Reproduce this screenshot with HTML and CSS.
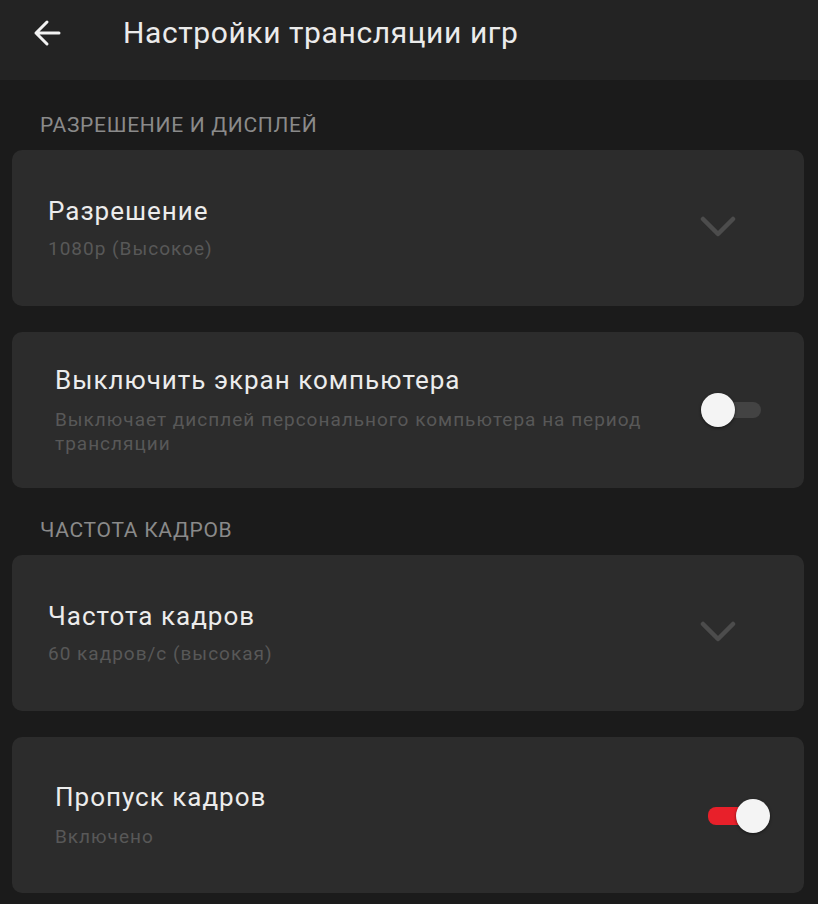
FILE: index.html
```html
<!DOCTYPE html>
<html lang="ru">
<head>
<meta charset="utf-8">
<title>Настройки трансляции игр</title>
<link rel="stylesheet" href="styles.css">
</head>
<body>
<header class="appbar">
  <svg class="back" viewBox="0 0 28 28" width="28" height="28" aria-hidden="true">
    <path d="M26 14H3 M14 3 3 14l11 11" fill="none" stroke="#f2f2f2" stroke-width="3" stroke-linecap="round" stroke-linejoin="round"/>
  </svg>
  <h1 class="appbar-title">Настройки трансляции игр</h1>
</header>
<main class="content">
  <section class="section">
    <h2 class="section-label">РАЗРЕШЕНИЕ И ДИСПЛЕЙ</h2>
    <div class="card card-select">
      <div class="card-text">
        <div class="card-title">Разрешение</div>
        <div class="card-sub">1080p (Высокое)</div>
      </div>
      <svg class="chevron" viewBox="0 0 36 22" width="36" height="22" aria-hidden="true">
        <path d="M3 3 18 18 33 3" fill="none" stroke="#4c4c4c" stroke-width="4.5" stroke-linecap="round" stroke-linejoin="round"/>
      </svg>
    </div>
    <div class="card card-toggle">
      <div class="card-text">
        <div class="card-title">Выключить экран компьютера</div>
        <div class="card-sub">Выключает дисплей персонального компьютера на период трансляции</div>
      </div>
      <div class="toggle toggle-off"><span class="track"></span><span class="knob"></span></div>
    </div>
  </section>

  <section class="section">
    <h2 class="section-label">ЧАСТОТА КАДРОВ</h2>
    <div class="card card-select">
      <div class="card-text">
        <div class="card-title">Частота кадров</div>
        <div class="card-sub">60 кадров/с (высокая)</div>
      </div>
      <svg class="chevron" viewBox="0 0 36 22" width="36" height="22" aria-hidden="true">
        <path d="M3 3 18 18 33 3" fill="none" stroke="#4c4c4c" stroke-width="4.5" stroke-linecap="round" stroke-linejoin="round"/>
      </svg>
    </div>
    <div class="card card-toggle">
      <div class="card-text">
        <div class="card-title">Пропуск кадров</div>
        <div class="card-sub">Включено</div>
      </div>
      <div class="toggle toggle-on"><span class="track"></span><span class="knob"></span></div>
    </div>
  </section>
</main>
</body>
</html>
```
FILE: styles.css
```css
* { box-sizing: border-box; }

html, body {
  margin: 0;
  padding: 0;
  background: #1b1b1b;
  font-family: Roboto, "Noto Sans", "Liberation Sans", sans-serif;
  color: #ececec;
}

body {
  width: 818px;
  height: 904px;
  overflow: hidden;
}

.appbar {
  height: 80px;
  background: #232323;
  display: flex;
  align-items: center;
  padding-left: 33px;
  gap: 62px;
}

.back {
  display: block;
  flex: none;
  margin-top: -14px;
}

.appbar-title {
  margin: -14px 0 0 0;
  font-size: 30px;
  line-height: 36px;
  font-weight: 400;
  color: #ebebeb;
  letter-spacing: 0.6px;
}

.content {
  padding: 0 14px 0 12px;
  display: flex;
  flex-direction: column;
}

.section {
  display: flex;
  flex-direction: column;
  gap: 26px;
}

.section-label {
  margin: 0 0 -26px 0;
  padding: 31px 0 11px 28px;
  font-size: 21px;
  line-height: 28px;
  font-weight: 400;
  color: #8a8a8a;
  letter-spacing: 0.7px;
}

.section + .section .section-label {
  padding-top: 28px;
}

.card {
  height: 156px;
  background: #2c2c2c;
  border-radius: 10px;
  display: flex;
  align-items: center;
}

.card-select {
  padding-left: 36px;
}

.card-toggle {
  padding-left: 43px;
}

.card-text {
  flex: 1;
  min-width: 0;
}

.card-title {
  font-size: 26px;
  line-height: 32px;
  letter-spacing: 1px;
  color: #ececec;
}

.card-sub {
  font-size: 19px;
  line-height: 24px;
  letter-spacing: 1px;
  color: #585858;
}

.card-select .card-sub {
  margin-top: 10px;
}

.card-toggle .card-sub {
  margin-top: 12px;
  max-width: 620px;
}

.chevron {
  flex: none;
  display: block;
  margin-right: 68px;
  margin-top: -2px;
}

.toggle {
  position: relative;
  flex: none;
  width: 62px;
  height: 34px;
}

.toggle-off {
  margin-right: 41px;
}

.toggle-on {
  margin-right: 34px;
  margin-top: 2px;
}

.track {
  position: absolute;
  top: 9px;
  left: 0;
  right: 2px;
  height: 16px;
  border-radius: 8px;
  background: #434343;
}

.toggle-on .track {
  background: #e8202a;
  right: 20px;
  height: 18px;
  top: 8px;
}

.knob {
  position: absolute;
  top: 0;
  width: 34px;
  height: 34px;
  border-radius: 50%;
  background: #f4f4f4;
  box-shadow: 0 1px 3px rgba(0, 0, 0, 0.55);
}

.toggle-off .knob { left: 0; }
.toggle-on .knob { right: 0; }
```
